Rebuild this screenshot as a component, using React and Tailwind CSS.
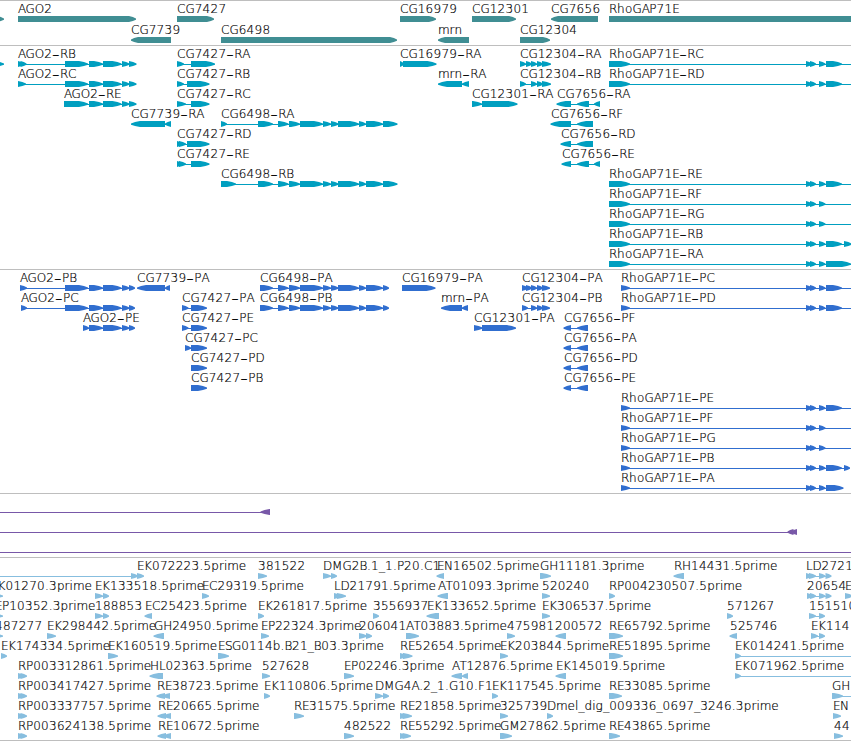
import React from 'react';

const WIDTH = 851;

// Advance widths of the label face, in pixels
const ADVANCE = {
  A: 7.6, B: 7.5, C: 8.5, D: 9, E: 7, F: 7, G: 9.2, H: 9, K: 8, L: 6.5, M: 10.5, N: 9, O: 9.4, P: 7.2, R: 8, S: 7, T: 7,
  b: 7.7, d: 7.7, e: 7.5, g: 7.7, h: 8, i: 3.3, l: 3.5, m: 11.5, n: 7.7, o: 7.5, p: 7.7, r: 5,
  '.': 4, _: 6, '-': 8,
};

// feature: [label, row, x, blocks, options]
const GENES = [
  ['', 0, -8, [[-8, 4]]],
  ['AGO2', 0, 18, [[18, 136]]],
  ['CG7427', 0, 177, [[177, 214]]],
  ['CG16979', 0, 400, [[400, 436]]],
  ['CG12301', 0, 472, [[472, 516]]],
  ['CG7656', 0, 551, [[551, 598]], { reverse: true }],
  ['RhoGAP71E', 0, 609, [[609, 870]]],
  ['CG7739', 1, 131, [[131, 171]], { reverse: true }],
  ['CG6498', 1, 221, [[221, 397]]],
  ['mrn', 1, 438, [[438, 469]], { reverse: true }],
  ['CG12304', 1, 520, [[520, 550]]],
];

const AGO2_EXONS = [[89, 103], [103, 121.5], [122, 129.5]];
const CG6498_EXONS = [[278, 288.5], [289, 300], [300, 323], [323, 331], [331, 338.5], [338, 359], [359, 366], [366, 383]];
const RHO_SHORT = [[806, 812], [810, 816], [819, 825.5]];
const RHO_LONG = [...RHO_SHORT, [826, 842]];

const TRANSCRIPTS = [
  ['', 0, -8, [[-8, 4]]],
  ['AGO2-RB', 0, 18, [[18, 24], [20.5, 26.5], [65, 88], ...AGO2_EXONS, [129, 136.5]]],
  ['AGO2-RC', 1, 18, [[18, 26], [65, 88], ...AGO2_EXONS, [129, 136.5]]],
  ['AGO2-RE', 2, 64, [[64, 88], ...AGO2_EXONS, [129, 136.5]]],
  ['CG7739-RA', 3, 131, [[131, 165], [165, 171]], { reverse: true }],
  ['CG7427-RA', 0, 177, [[177, 184], [191, 215]]],
  ['CG7427-RB', 1, 177, [[177, 184], [187, 209.5]]],
  ['CG7427-RC', 2, 177, [[177, 186], [191, 209.5]]],
  ['CG7427-RD', 4, 177, [[177, 183], [179, 186], [187, 209.5]]],
  ['CG7427-RE', 5, 177, [[177, 183], [179, 186], [191, 209.5]]],
  ['CG6498-RA', 3, 221, [[221, 227], [258, 273], ...CG6498_EXONS, [383, 397.5]]],
  ['CG6498-RB', 6, 221, [[221, 236], [258, 273], ...CG6498_EXONS, [383, 397.5]]],
  ['CG16979-RA', 0, 400, [[400, 404], [403, 436.5]]],
  ['mrn-RA', 1, 438, [[438, 462], [462, 469]], { reverse: true }],
  ['CG12301-RA', 2, 472, [[472, 482], [482, 517.5]]],
  ['CG12304-RA', 0, 520, [[520, 526], [526, 532], [531, 537], [537, 543], [542, 551]]],
  ['CG12304-RB', 1, 520, [[520, 526], [531, 537], [537, 543], [542, 551]]],
  ['CG7656-RA', 2, 557, [[556.5, 571], [577, 589], [594, 600]], { reverse: true }],
  ['CG7656-RF', 3, 551, [[550.5, 571], [577, 593]], { reverse: true }],
  ['CG7656-RD', 4, 561, [[560.5, 571], [577, 593]], { reverse: true }],
  ['CG7656-RE', 5, 562, [[561.5, 571], [577, 589], [594, 600]], { reverse: true }],
  ['RhoGAP71E-RC', 0, 609, [[609, 630], ...RHO_LONG], { to: WIDTH }],
  ['RhoGAP71E-RD', 1, 609, [[609, 630], ...RHO_LONG], { to: WIDTH }],
  ['RhoGAP71E-RE', 6, 609, [[609, 630], ...RHO_LONG], { to: WIDTH }],
  ['RhoGAP71E-RF', 7, 609, [[609, 630], ...RHO_SHORT], { to: WIDTH }],
  ['RhoGAP71E-RG', 8, 609, [[609, 630], ...RHO_SHORT], { to: WIDTH }],
  ['RhoGAP71E-RB', 9, 609, [[609, 630], ...RHO_LONG, [844, 852]], { to: WIDTH }],
  ['RhoGAP71E-RA', 10, 609, [[609, 630], ...RHO_SHORT, [826, 851]], { to: WIDTH }],
];

const PROTEINS = [
  ['AGO2-PB', 0, 20, [[20, 27], [65, 88], ...AGO2_EXONS, [129, 135]]],
  ['AGO2-PC', 1, 21, [[21, 27], [65, 88], ...AGO2_EXONS, [129, 135]]],
  ['AGO2-PE', 2, 83, [[83, 89], ...AGO2_EXONS, [129, 135]]],
  ['CG7739-PA', 0, 137, [[137, 165], [165, 170]], { reverse: true }],
  ['CG7427-PA', 1, 182, [[182, 188.5], [191, 207]]],
  ['CG7427-PE', 2, 182, [[182, 188.5], [191, 207]]],
  ['CG7427-PC', 3, 185, [[185, 191], [191, 207]]],
  ['CG7427-PD', 4, 191, [[191, 207]]],
  ['CG7427-PB', 5, 191, [[191, 207]]],
  ['CG6498-PA', 0, 260, [[260, 273], ...CG6498_EXONS, [383, 389]]],
  ['CG6498-PB', 1, 260, [[260, 273], ...CG6498_EXONS, [383, 389]]],
  ['CG16979-PA', 0, 402, [[402, 435.5]]],
  ['mrn-PA', 1, 441, [[441, 462], [462, 468]], { reverse: true }],
  ['CG12301-PA', 2, 474, [[474, 482.5], [482, 516]]],
  ['CG12304-PA', 0, 522, [[522, 528], [526, 532], [531, 537], [537, 543], [542, 550]]],
  ['CG12304-PB', 1, 522, [[522, 528], [531, 537], [537, 543], [542, 550]]],
  ['CG7656-PF', 2, 564, [[563.5, 571], [577, 588]], { reverse: true }],
  ['CG7656-PA', 3, 564, [[563.5, 571], [577, 588]], { reverse: true }],
  ['CG7656-PD', 4, 564, [[563.5, 571], [577, 588]], { reverse: true }],
  ['CG7656-PE', 5, 564, [[563.5, 571], [577, 588]], { reverse: true }],
  ['RhoGAP71E-PC', 0, 621, [[621, 630], ...RHO_LONG], { to: WIDTH }],
  ['RhoGAP71E-PD', 1, 621, [[621, 630], ...RHO_LONG], { to: WIDTH }],
  ['RhoGAP71E-PE', 6, 621, [[621, 630], ...RHO_LONG], { to: WIDTH }],
  ['RhoGAP71E-PF', 7, 621, [[621, 630], ...RHO_SHORT], { to: WIDTH }],
  ['RhoGAP71E-PG', 8, 621, [[621, 630], ...RHO_SHORT], { to: WIDTH }],
  ['RhoGAP71E-PB', 9, 621, [[621, 630], ...RHO_LONG, [844, 850]]],
  ['RhoGAP71E-PA', 10, 621, [[621, 630], ...RHO_SHORT, [826, 843.5]]],
];

const INSERTIONS = [
  ['', 0, 0, [[260.5, 270]], { reverse: true, from: 0 }],
  ['', 1, 0, [[787.5, 793.5], [791, 797]], { reverse: true, from: 0 }],
  ['', 2, 0, [], { from: 0, to: WIDTH }],
];

const ESTS = [
  ['EK072223.5prime', 0, 137, [[131, 138], [137, 144]], { from: 0 }],
  ['381522', 0, 258, [[258, 267]]],
  ['DMG2B.1_1.P20.C1', 0, 323, [[323, 331], [331, 337]]],
  ['EN16502.5prime', 0, 437, [[436.5, 444]], { reverse: true }],
  ['GH11181.3prime', 0, 540, [[540, 551]]],
  ['RH14431.5prime', 0, 674, [[673.5, 684]], { reverse: true }],
  ['LD2721', 0, 806, [[806, 812], [809, 816], [819, 825.5], [825.5, 831.5]]],
  ['EK01270.3prime', 1, -9.5, [[-6, 3]]],
  ['EK133518.5prime', 1, 95, [[95, 103], [103, 109]]],
  ['EC29319.5prime', 1, 202, [[202, 209]]],
  ['LD21791.5prime', 1, 334, [[334, 341], [337, 346]]],
  ['AT01093.3prime', 1, 438, [[437.5, 448]], { reverse: true }],
  ['520240', 1, 542, [[542, 550]]],
  ['RP004230507.5prime', 1, 609, [[609, 615]]],
  ['20654', 1, 807, [[807, 813], [810, 816], [819, 825.5], [825.5, 831.5]]],
  ['E', 1, 845, [[845, 853]]],
  ['EP10352.3prime', 2, -5, [[-6, 3]]],
  ['188853', 2, 95, [[95, 103], [103, 109]]],
  ['EC25423.5prime', 2, 145, [[144.5, 152]], { reverse: true }],
  ['EK261817.5prime', 2, 258, [[258, 264]]],
  ['3556937', 2, 373, [[373, 379]]],
  ['EK133652.5prime', 2, 427, [[426.5, 439]], { reverse: true }],
  ['EK306537.5prime', 2, 542, [[542, 550]]],
  ['571267', 2, 727, [[727, 733]]],
  ['151510', 2, 809, [[809, 816], [819, 825]]],
  ['487277', 3, -5, [[-6, 3]]],
  ['EK298442.5prime', 3, 47, [[47, 56]]],
  ['GH24950.5prime', 3, 154, [[153.5, 164]], { reverse: true }],
  ['EP22324.3prime', 3, 261, [[261, 269]]],
  ['206041', 3, 359, [[359, 367], [366, 372]]],
  ['AT03883.5prime', 3, 406, [[406, 419]]],
  ['475981', 3, 507, [[507, 515]]],
  ['200572', 3, 555, [[555.5, 566]], { reverse: true }],
  ['RE65792.5prime', 3, 609, [[609, 623]]],
  ['525746', 3, 730, [[729.5, 737]], { reverse: true }],
  ['EK114', 3, 811, [[811, 818], [819, 825]]],
  ['EK174334.5prime', 4, 1, [[1, 7]]],
  ['EK160519.5prime', 4, 108, [[108, 118]]],
  ['ESG0114b.B21_B03.3prime', 4, 218, [[218, 229]]],
  ['RE52654.5prime', 4, 400, [[400, 407], [403, 412.5]]],
  ['EK203844.5prime', 4, 500, [[500, 508]]],
  ['RE51895.5prime', 4, 609, [[609, 623]]],
  ['EK014241.5prime', 4, 735, [[735, 741]], { to: WIDTH }],
  ['RP003312861.5prime', 5, 18, [[18, 24], [20.5, 27]]],
  ['HL02363.5prime', 5, 150, [[149.5, 163]], { reverse: true }],
  ['527628', 5, 262, [[262, 270]]],
  ['EP02246.3prime', 5, 344, [[344, 354]]],
  ['AT12876.5prime', 5, 452, [[451.5, 462], [462, 468]], { reverse: true }],
  ['EK145019.5prime', 5, 556, [[555.5, 566]], { reverse: true }],
  ['EK071962.5prime', 5, 735, [[735, 741]], { to: WIDTH }],
  ['RP003417427.5prime', 6, 18, [[18, 24], [20.5, 27]]],
  ['RE38723.5prime', 6, 157, [[156.5, 165], [162.5, 170]], { reverse: true }],
  ['EK110806.5prime', 6, 264, [[264, 270]]],
  ['DMG4A.2_1.G10.F1', 6, 375, [[375, 383], [383, 389]]],
  ['EK117545.5prime', 6, 492, [[492, 498]]],
  ['RE33085.5prime', 6, 609, [[609, 622]]],
  ['GH', 6, 832, [[832, 843]], { to: WIDTH }],
  ['RP003337757.5prime', 7, 18, [[18, 24], [20.5, 27]]],
  ['RE20665.5prime', 7, 158, [[157.5, 166], [163.5, 171]], { reverse: true }],
  ['RE31575.5prime', 7, 294, [[294, 304]]],
  ['RE21858.5prime', 7, 400, [[400, 406], [402.5, 412]]],
  ['325739', 7, 500, [[500, 508]]],
  ['Dmel_dig_009336_0697_3246.3prime', 7, 547, [[547, 553]]],
  ['EN', 7, 833, [[833, 841]]],
  ['RP003624138.5prime', 8, 18, [[18, 24], [20.5, 27]]],
  ['RE10672.5prime', 8, 158, [[157.5, 166], [163.5, 171]], { reverse: true }],
  ['482522', 8, 344, [[344, 354]]],
  ['RE55292.5prime', 8, 400, [[400, 406], [402.5, 411]]],
  ['GM27862.5prime', 8, 500, [[500, 512]]],
  ['RE43865.5prime', 8, 609, [[609, 620]]],
  ['44', 8, 834, [[834, 843]]],
];

function glyphPositions(label, x) {
  let pos = x;
  return [...label].map((ch) => {
    const at = pos;
    pos += ADVANCE[ch] ?? 7.9;
    return at.toFixed(1);
  });
}

// The hyphen is set larger than the letters, so it gets its own tspan
function Label({ label, x, y }) {
  const xs = glyphPositions(label, x);
  const dash = label.indexOf('-');
  if (dash < 0) return <text x={xs.join(' ')} y={y}>{label}</text>;
  return (
    <text y={y}>
      <tspan x={xs.slice(0, dash).join(' ')}>{label.slice(0, dash)}</tspan>
      <tspan x={xs[dash]} y={y + 2.5} className="text-[21px]">-</tspan>
      <tspan x={xs.slice(dash + 1).join(' ')} y={y}>{label.slice(dash + 1)}</tspan>
    </text>
  );
}

function Arrow({ from, to, y, tip, reverse }) {
  const head = Math.min(to - from, tip);
  const dir = reverse ? -1 : 1;
  const tail = reverse ? to : from;
  const point = reverse ? from : to;
  const neck = point - dir * head;
  const mid = point - dir * head * 0.45;
  return (
    <polygon
      points={`${tail},${y} ${neck},${y} ${mid},${y + 1.1} ${point},${y + 2.6} ${point},${y + 3.7} ${mid},${y + 4.9} ${neck},${y + 6} ${tail},${y + 6}`}
    />
  );
}

function Feature({ feature, y, tip }) {
  const [label, , x, blocks, options = {}] = feature;
  const start = options.from ?? blocks[0][0] + 1;
  const end = options.to ?? blocks[blocks.length - 1][1] - 1;
  return (
    <g>
      <rect x={start} y={y + 6} width={end - start} height="1" shapeRendering="crispEdges" />
      {blocks.map(([from, to], i) => (
        <Arrow key={i} from={from} to={to} y={y + 3} tip={tip} reverse={options.reverse} />
      ))}
      {label && (
        <g className="fill-black stroke-black stroke-[0.2px] font-extralight">
          <Label label={label} x={x} y={y} />
        </g>
      )}
    </g>
  );
}

function Track({ features, height, baseline, pitch = 20, tip = 9, className }) {
  return (
    <section className="border-t border-[#bebebe]">
      <svg width={WIDTH} height={height} className={`block overflow-hidden ${className}`}>
        {features.map((feature, i) => (
          <Feature key={i} feature={feature} y={baseline + feature[1] * pitch} tip={tip} />
        ))}
      </svg>
    </section>
  );
}

export default function App() {
  return (
    <main className="w-[851px] h-[741px] overflow-hidden bg-white border-b border-[#bebebe] font-['DejaVu_Sans',sans-serif] text-[12px]">
      <Track features={GENES} height={44} baseline={12} pitch={21} tip={7} className="fill-[#408e93]" />
      <Track features={TRANSCRIPTS} height={223} baseline={12} className="fill-[#009fc0]" />
      <Track features={PROTEINS} height={223} baseline={12} className="fill-[#306ecf]" />
      <Track features={INSERTIONS} height={63} baseline={12} className="fill-[#7858a8]" />
      <Track features={ESTS} height={182} baseline={12} className="fill-[#87bedf]" />
    </main>
  );
}
